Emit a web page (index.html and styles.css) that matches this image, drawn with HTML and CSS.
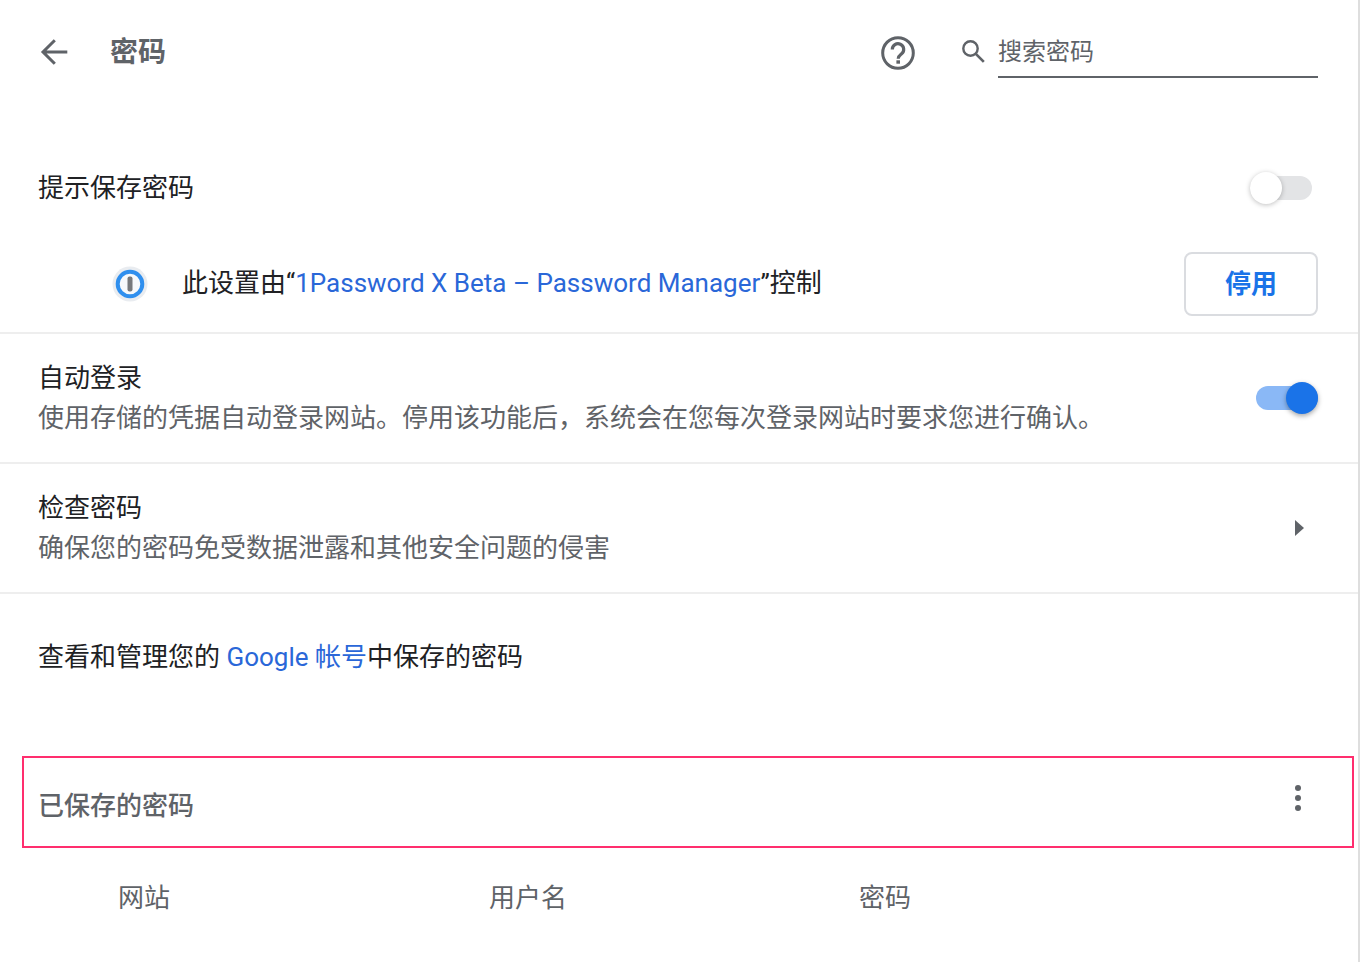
FILE: index.html
```html
<!DOCTYPE html>
<html lang="zh-CN">
<head>
<meta charset="utf-8">
<title>密码</title>
<link rel="stylesheet" href="styles.css">
</head>
<body>
<main class="page">
  <header class="top">
    <svg class="back" width="30" height="30" viewBox="0 0 30 30"><path d="M27.300 15H4M14.800 3.200 3 15 14.800 26.800" fill="none" stroke="#5f6368" stroke-width="3"/></svg>
    <h1 class="title">密码</h1>
    <svg class="help" width="34" height="34" viewBox="0 0 34 34"><circle cx="17" cy="17" r="15.300" fill="none" stroke="#5f6368" stroke-width="3"/><path d="M11.300 13.500a5.700 5.700 0 1 1 9.300 4.300c-2 1.600-3.400 2.400-3.400 5" fill="none" stroke="#5f6368" stroke-width="3.200"/><rect x="15.400" y="24.300" width="3.600" height="3.400" fill="#5f6368"/></svg>
    <svg class="search" width="24" height="24" viewBox="0 0 24 24"><circle cx="9.500" cy="9.500" r="7.200" fill="none" stroke="#5f6368" stroke-width="2.400"/><path d="m14.800 14.800 8 8" stroke="#5f6368" stroke-width="2.600"/></svg>
    <div class="searchbox">搜索密码</div>
  </header>

  <section class="row-prompt">
    <span class="label">提示保存密码</span>
    <span class="toggle off"><span class="knob"></span></span>
  </section>

  <section class="row-managed">
    <svg class="ext" width="36" height="36" viewBox="0 0 36 36"><circle cx="18" cy="18" r="17.500" fill="#e9ecf0"/><circle cx="18" cy="18" r="12.300" fill="#f7f9fb" stroke="#2f8fee" stroke-width="4"/><rect x="15.500" y="10.500" width="5" height="15" rx="2" fill="#77797c"/></svg>
    <p class="label managed-text">此设置由“<a class="link">1Password X Beta – Password Manager</a>”控制</p>
    <button class="btn">停用</button>
  </section>

  <section class="row">
    <div>
      <div class="label">自动登录</div>
      <div class="sub">使用存储的凭据自动登录网站。停用该功能后，系统会在您每次登录网站时要求您进行确认。</div>
    </div>
    <span class="toggle on"><span class="knob"></span></span>
  </section>

  <section class="row">
    <div>
      <div class="label">检查密码</div>
      <div class="sub">确保您的密码免受数据泄露和其他安全问题的侵害</div>
    </div>
    <span class="arrow"></span>
  </section>

  <section class="row-account">
    <span class="label">查看和管理您的 <a class="link">Google 帐号</a>中保存的密码</span>
  </section>

  <section class="saved">
    <h2 class="saved-title">已保存的密码</h2>
    <span class="dots"><i></i><i></i><i></i></span>
  </section>

  <div class="cols">
    <span class="col col-site">网站</span>
    <span class="col col-user">用户名</span>
    <span class="col">密码</span>
  </div>
</main>
</body>
</html>
```

FILE: styles.css
```css
* { box-sizing: border-box; }
html, body { margin: 0; padding: 0; background: #fff; }
body {
  font-family: Roboto, "Noto Sans CJK SC", sans-serif;
  font-size: 26px;
  line-height: 40px;
  color: #202124;
  overflow: hidden;
}
.page {
  width: 1360px;
  height: 962px;
  border-right: 2px solid #dedede;
  overflow: hidden;
}
.top {
  height: 104px;
  display: flex;
  align-items: center;
  padding: 0 40px 0 40px;
}
.back { margin-right: 40px; }
.title { margin: 2px 0 0; font-size: 28px; font-weight: 700; color: #5f6368; flex: 1; }
.help { margin: 2px 46px 0 0; }
.search { margin-right: 13px; margin-top: -2px; }
.searchbox {
  width: 320px;
  height: 52px;
  padding-top: 6px;
  font-size: 24px;
  color: #5f6368;
  border-bottom: 2px solid #5f6368;
}
.row-prompt {
  margin-top: 32px;
  height: 102px;
  padding: 2px 46px 0 38px;
  display: flex;
  align-items: center;
  justify-content: space-between;
}
.row-managed {
  height: 96px;
  display: flex;
  align-items: flex-start;
  padding: 14px 40px 0 112px;
  border-bottom: 2px solid #eeeeee;
}
.ext { margin-top: 14px; margin-right: 34px; }
.managed-text { margin: 11px 0 0; flex: 1; }
.btn {
  width: 134px;
  height: 64px;
  padding: 0 0 6px;
  border: 2px solid #dadce0;
  border-radius: 8px;
  background: #fff;
  color: #1a73e8;
  font: 700 26px Roboto, "Noto Sans CJK SC", sans-serif;
}
.link { color: #2a67d8; }
.row {
  height: 130px;
  display: flex;
  align-items: center;
  justify-content: space-between;
  padding: 0 40px 0 38px;
  border-bottom: 2px solid #eeeeee;
}
.sub { color: #5f6368; }
.toggle { position: relative; display: block; width: 62px; height: 24px; border-radius: 12px; }
.toggle.off { background: #e3e4e6; }
.toggle.on { background: #8ab8f6; }
.knob { position: absolute; top: -4px; width: 32px; height: 32px; border-radius: 50%; }
.off .knob { left: 0; background: #fff; box-shadow: 0 1px 5px rgba(0,0,0,.25); }
.on .knob { right: 0; background: #1a73e8; box-shadow: 0 2px 5px rgba(0,0,0,.35); }
.arrow {
  width: 0; height: 0;
  margin-right: 14px;
  border-left: 9px solid #5f6368;
  border-top: 8px solid transparent;
  border-bottom: 8px solid transparent;
}
.row-account {
  height: 126px;
  display: flex;
  align-items: center;
}
.row-account .label { padding-left: 38px; }
.saved {
  margin: 36px 0 0 22px;
  width: 1332px;
  height: 92px;
  border: 2px solid #ff2e6e;
  display: flex;
  justify-content: space-between;
  padding: 0 51px 0 14px;
}
.saved-title { margin: 28px 0 0; font-size: 26px; line-height: 40px; font-weight: 500; color: #5f6368; }
.dots { display: flex; flex-direction: column; gap: 4px; margin-top: 27px; }
.dots i { display: block; width: 6px; height: 6px; border-radius: 50%; background: #5f6368; }
.cols {
  height: 100px;
  display: flex;
  align-items: center;
  padding-left: 118px;
  color: #5f6368;
}
.col-site { width: 371px; }
.col-user { width: 370px; }
```
